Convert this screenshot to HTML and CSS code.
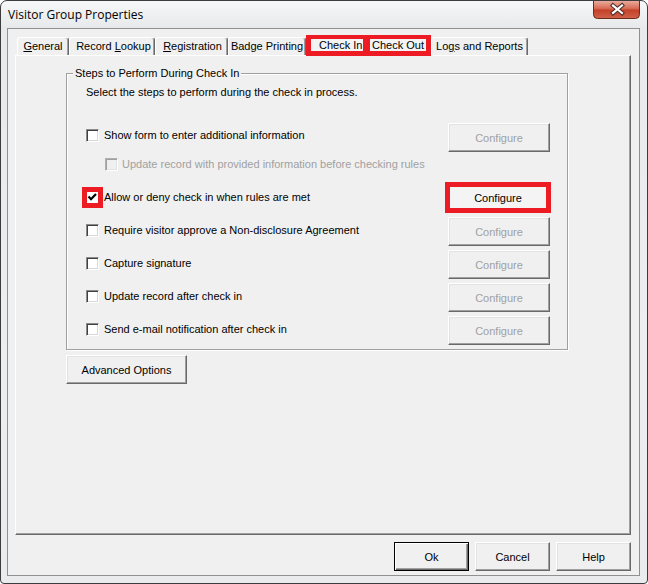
FILE: index.html
```html
<!DOCTYPE html>
<html lang="en">
<head>
<meta charset="utf-8">
<title>Visitor Group Properties</title>
<link rel="stylesheet" href="styles.css">
</head>
<body>
<div class="window">
  <div class="titlebar">
    <span class="title">Visitor Group Properties</span>
    <button class="close" aria-label="Close">
      <svg width="47" height="19" viewBox="0 0 47 19">
        <defs>
          <linearGradient id="cg" x1="0" y1="0" x2="0" y2="1">
            <stop offset="0" stop-color="#eab3a5"/>
            <stop offset="0.45" stop-color="#d86d57"/>
            <stop offset="0.55" stop-color="#c4412a"/>
            <stop offset="1" stop-color="#d0624a"/>
          </linearGradient>
        </defs>
        <path d="M0.5 0 V14.5 A4 4 0 0 0 4.5 18.5 H42.5 A4 4 0 0 0 46.5 14.5 V0" fill="url(#cg)" stroke="#6e2a1e"/>
        <path d="M20 5.5 L29 13 M29 5.5 L20 13" stroke="#4a2a24" stroke-width="4.2" stroke-linecap="square"/>
        <path d="M20 5.5 L29 13 M29 5.5 L20 13" stroke="#ffffff" stroke-width="2.2" stroke-linecap="square"/>
      </svg>
    </button>
  </div>
  <div class="client">
    <div class="tabstrip">
      <div class="tab w-general"><u>G</u>eneral</div>
      <div class="tab w-lookup">Record <u>L</u>ookup</div>
      <div class="tab w-reg"><u>R</u>egistration</div>
      <div class="tab w-badge">Badge Printing</div>
      <div class="mark-tabs">
        <div class="mark-tab mt-in">Check In</div>
        <div class="mark-tab mt-out">Check Out</div>
      </div>
      <div class="tab w-logs">Lo<u>g</u>s and Reports</div>
    </div>
    <div class="panel">
      <fieldset class="group">
        <legend>Steps to Perform During Check In</legend>
        <p class="intro">Select the steps to perform during the check in process.</p>
        <div class="row r-first">
          <label class="opt"><span class="cb"></span>Show form to enter additional information</label>
          <button class="btn cfg" disabled>Configure</button>
        </div>
        <div class="sub"><span class="cb dis"></span>Update record with provided information before checking rules</div>
        <div class="row r-mark">
          <label class="opt"><span class="cb marked"><svg width="11" height="11" viewBox="0 0 11 11"><path d="M1.5 4.5 L4 7.2 L9 2" fill="none" stroke="#000" stroke-width="2.2"/></svg></span>Allow or deny check in when rules are met</label>
          <button class="btn cfg cfg-mark">Configure</button>
        </div>
        <div class="row">
          <label class="opt"><span class="cb"></span>Require visitor approve a Non-disclosure Agreement</label>
          <button class="btn cfg" disabled>Configure</button>
        </div>
        <div class="row">
          <label class="opt"><span class="cb"></span>Capture signature</label>
          <button class="btn cfg" disabled>Configure</button>
        </div>
        <div class="row">
          <label class="opt"><span class="cb"></span>Update record after check in</label>
          <button class="btn cfg" disabled>Configure</button>
        </div>
        <div class="row">
          <label class="opt"><span class="cb"></span>Send e-mail notification after check in</label>
          <button class="btn cfg" disabled>Configure</button>
        </div>
      </fieldset>
      <button class="btn adv">Advanced Options</button>
    </div>
    <div class="actions">
      <button class="btn act default">Ok</button>
      <button class="btn act">Cancel</button>
      <button class="btn act">Help</button>
    </div>
  </div>
</div>
</body>
</html>
```
FILE: styles.css
```css
* { box-sizing: border-box; }
html, body { margin: 0; padding: 0; }
body {
  width: 648px;
  height: 584px;
  background: #ffffff;
  font-family: "Liberation Sans", Arial, sans-serif;
  font-size: 11px;
  color: #000;
}
.window {
  width: 648px;
  height: 584px;
  border: 1px solid #3c3c3c;
  border-radius: 7px 7px 4px 4px;
  background: linear-gradient(to bottom, #f6f7f8 0, #e7e9eb 27px, #eceef0 60%, #e9ebed 100%);
  display: flex;
  flex-direction: column;
  overflow: hidden;
}
.titlebar {
  height: 27px;
  flex: none;
  display: flex;
  justify-content: space-between;
  align-items: flex-start;
  padding: 0 7px 0 7px;
}
.title {
  font-family: "Open Sans", "Noto Sans", sans-serif;
  font-size: 12px;
  line-height: 16px;
  padding-top: 6px;
  color: #000;
}
.close {
  display: block;
  width: 47px;
  height: 19px;
  margin-top: -1px;
  padding: 0;
  border: 0;
  background: none;
}
.close svg { display: block; }
.client {
  flex: none;
  margin: 0 7px 0 6px;
  height: 548px;
  border: 1px solid #8e9092;
  background: #f0f0f0;
  padding: 6px 8px 0 7px;
}
.tabstrip {
  height: 20px;
  display: flex;
  align-items: flex-end;
  padding-left: 2px;
}
.tab {
  height: 18px;
  background: #f0f0f0;
  border-top: 1px solid #fff;
  border-left: 1px solid #fff;
  border-right: 1px solid #696969;
  box-shadow: inset -1px 0 0 #a0a0a0;
  border-radius: 3px 3px 0 0;
  text-align: center;
  line-height: 17px;
  white-space: nowrap;
}
.w-general { width: 52px; }
.w-lookup { width: 86px; padding-left: 3px; }
.w-reg { width: 73px; padding-left: 2px; }
.w-badge { width: 78px; }
.w-logs { width: 97px; }
.mark-tabs {
  position: relative;
  z-index: 1;
  height: 21px;
  margin-bottom: -1px;
  display: flex;
  gap: 7px;
  padding: 4px 5px 5px 5px;
  background: #ed1c24;
}
.mark-tab {
  height: 12px;
  line-height: 12px;
  background: #f4f4f4;
  white-space: nowrap;
}
.mt-in { width: 52px; padding-left: 8px; }
.mt-out { width: 56px; padding-left: 2px; }
.panel {
  height: 480px;
  border-top: 1px solid #fff;
  border-left: 1px solid #fff;
  border-right: 1px solid #696969;
  border-bottom: 1px solid #696969;
  box-shadow: inset -1px -1px 0 #a0a0a0;
  padding: 10px 0 0 50px;
}
.group {
  margin: 0;
  width: 502px;
  min-width: 0;
  padding: 5px 17px 4px 19px;
  border: 1px solid #a0a0a0;
  box-shadow: 1px 1px 0 #fff, inset 1px 1px 0 #fff;
}
.group legend {
  margin-left: -13px;
  padding: 0 2px;
  line-height: 14px;
  background: #f0f0f0;
}
.intro {
  margin: 0;
  line-height: 14px;
}
.row {
  height: 29px;
  display: flex;
  justify-content: space-between;
  align-items: flex-start;
  margin-top: 4px;
}
.r-first { margin-top: 24px; }
.r-mark { margin-top: 13px; }
.opt {
  display: flex;
  align-items: center;
  gap: 5px;
  padding-top: 7px;
  line-height: 13px;
  white-space: nowrap;
}
.r-first .opt { padding-top: 6px; }
.sub {
  margin-top: 6px;
  margin-left: 19px;
  display: flex;
  align-items: center;
  gap: 4px;
  line-height: 13px;
  color: #a0a0a0;
}
.cb {
  flex: none;
  width: 13px;
  height: 13px;
  background: #fff;
  border: 1px solid;
  border-color: #8a8a8a #ffffff #ffffff #8a8a8a;
  box-shadow: inset 1px 1px 0 #404040, inset -1px -1px 0 #d8d8d8;
}
.cb svg { display: block; }
.cb.dis {
  background: #f0f0f0;
  border-color: #b0b0b0 #ffffff #ffffff #b0b0b0;
  box-shadow: inset 1px 1px 0 #a0a0a0, inset -1px -1px 0 #e3e3e3;
}
.cb.marked {
  box-shadow: 0 0 0 4px #ed1c24;
  border-color: #ed1c24;
}
.btn {
  font: inherit;
  color: #000;
  background: #f0f0f0;
  height: 29px;
  padding: 0;
  border: 1px solid;
  border-color: #ffffff #696969 #696969 #ffffff;
  box-shadow: inset -1px -1px 0 #a0a0a0, inset 1px 1px 0 #e3e3e3;
  text-align: center;
}
.btn:disabled { color: #a0a0a0; }
.cfg { width: 102px; flex: none; }
.cfg-mark {
  width: 106px;
  height: 31px;
  margin: -2px -1px 0 -3px;
  border: 5px solid #ed1c24;
  background: #f4f4f4;
  box-shadow: none;
}
.adv {
  display: block;
  width: 121px;
  margin-top: 5px;
}
.actions {
  display: flex;
  justify-content: flex-end;
  gap: 6px;
  margin-top: 7px;
}
.act { width: 75px; }
.default {
  border: 1px solid #000;
  box-shadow: inset 1px 1px 0 #fff, inset -1px -1px 0 #696969, inset -2px -2px 0 #a0a0a0;
}
```
